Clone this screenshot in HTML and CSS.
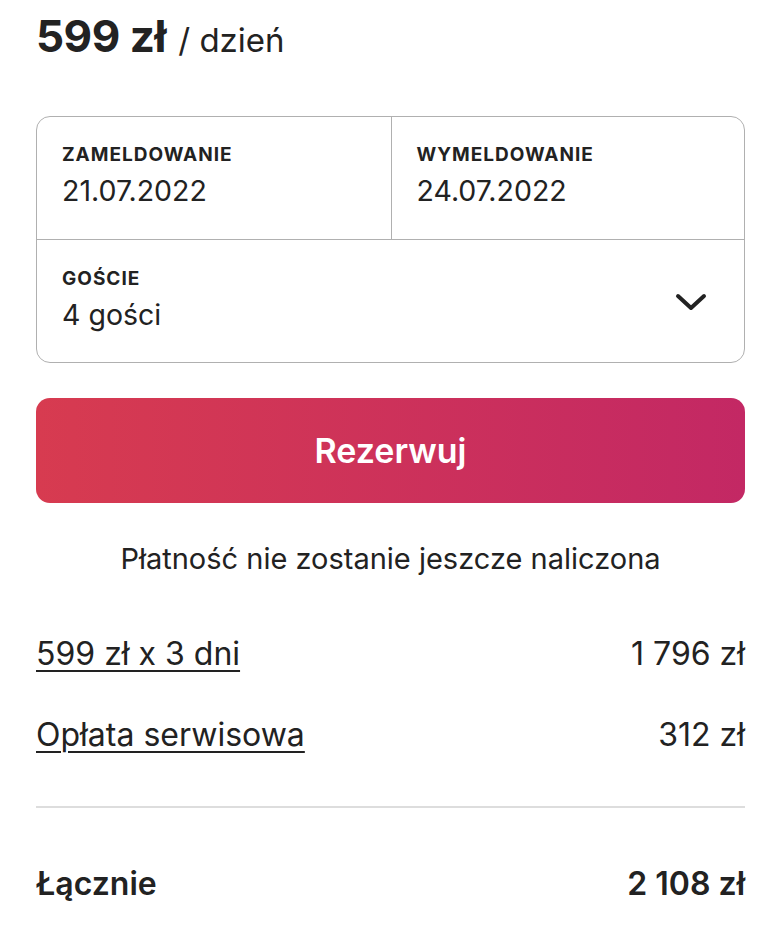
FILE: index.html
```html
<!DOCTYPE html>
<html lang="pl">
<head>
    <meta charset="UTF-8">
    <meta name="viewport" content="width=device-width, initial-scale=1.0">
    <title>Rezerwacja</title>
    <link rel="stylesheet" href="styles.css">
</head>
<body>

    <div class="booking">
        <h1 class="price"><span class="amount">599 zł</span> <span class="per">/ dzień</span></h1>

        <div class="picker">
            <div class="dates">
                <div class="field">
                    <div class="label">ZAMELDOWANIE</div>
                    <div class="value">21.07.2022</div>
                </div>
                <div class="field field-right">
                    <div class="label">WYMELDOWANIE</div>
                    <div class="value">24.07.2022</div>
                </div>
            </div>
            <div class="field guests">
                <div>
                    <div class="label">GOŚCIE</div>
                    <div class="value">4 gości</div>
                </div>
                <svg class="chevron" width="32" height="32" viewBox="0 0 32 32">
                    <path d="M3 11 L16 23 L29 11" fill="none" stroke="#222" stroke-width="4" stroke-linecap="round" stroke-linejoin="round"/>
                </svg>
            </div>
        </div>

        <button class="reserve">Rezerwuj</button>

        <p class="note">Płatność nie zostanie jeszcze naliczona</p>

        <div class="line">
            <a href="#">599 zł x 3 dni</a>
            <span>1 796 zł</span>
        </div>
        <div class="line">
            <a href="#">Opłata serwisowa</a>
            <span>312 zł</span>
        </div>

        <div class="total">
            <span>Łącznie</span>
            <span>2 108 zł</span>
        </div>
    </div>

</body>
</html>
```

FILE: styles.css
```css
body {
    margin: 0;
    font-family: Inter, "Noto Sans", sans-serif;
    color: #222222;
    background-color: #ffffff;
}

.booking {
    padding: 6px 35px 0 36px;
}

.price {
    margin: 0;
    height: 60px;
    font-size: 44px;
    font-weight: normal;
    line-height: 60px;
}

.price .amount {
    font-weight: 700;
    letter-spacing: -0.5px;
}

.price .per {
    font-size: 33px;
    line-height: 1;
}

.picker {
    margin-top: 50px;
    border: 1px solid #b0b0b0;
    border-radius: 14px;
}

.dates {
    display: grid;
    grid-template-columns: 1fr 1fr;
    border-bottom: 1px solid #b0b0b0;
}

.field {
    padding: 26px 25px 26px;
    height: 70px;
}

.field-right {
    border-left: 1px solid #b0b0b0;
}

.label {
    font-size: 19px;
    font-weight: 700;
    letter-spacing: 1px;
    line-height: 24px;
}

.value {
    margin-top: 4px;
    font-size: 28.5px;
    line-height: 40px;
}

.guests {
    display: flex;
    justify-content: space-between;
    align-items: center;
}

.chevron {
    margin-right: 12px;
}

.reserve {
    display: block;
    width: 100%;
    height: 105px;
    margin-top: 35px;
    border: none;
    border-radius: 14px;
    background: linear-gradient(90deg, #d73b50, #c32864);
    color: white;
    font-family: inherit;
    font-size: 34px;
    font-weight: 600;
    cursor: pointer;
}

.note {
    margin: 36px 0 0;
    text-align: center;
    font-size: 29px;
    line-height: 40px;
}

.line {
    display: flex;
    justify-content: space-between;
    font-size: 32px;
    line-height: 40px;
    margin-top: 55px;
}

.line + .line {
    margin-top: 41px;
}

.line a {
    color: #222222;
    text-decoration: underline;
    text-decoration-thickness: 2px;
    text-underline-offset: 5px;
}

.total {
    display: flex;
    justify-content: space-between;
    margin-top: 51px;
    padding-top: 56px;
    border-top: 2px solid #dddddd;
    font-size: 32px;
    font-weight: 600;
    line-height: 40px;
}
```
